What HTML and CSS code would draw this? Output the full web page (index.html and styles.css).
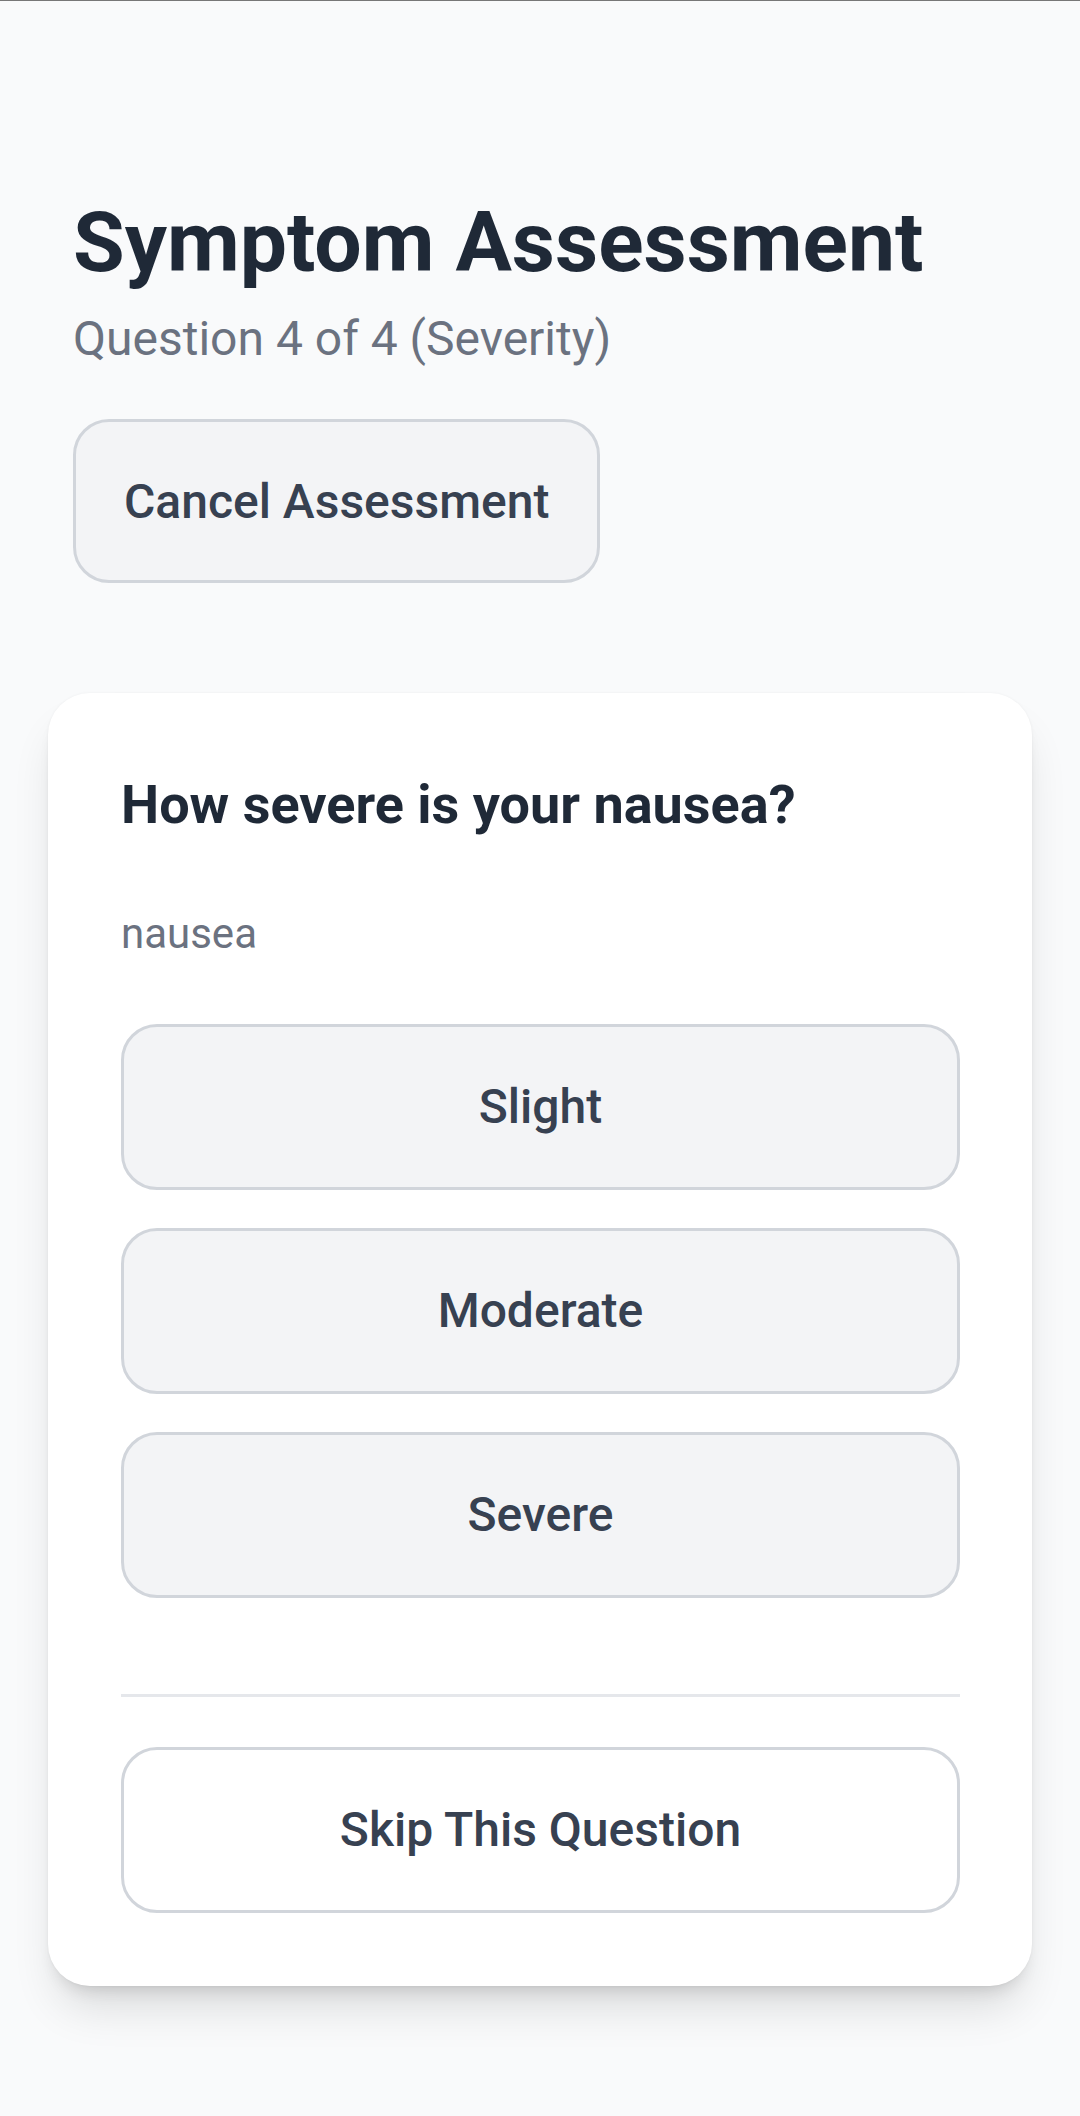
FILE: index.html
```html
<!DOCTYPE html>
<html lang="en">
<head>
<meta charset="utf-8">
<title>Symptom Assessment</title>
<link rel="stylesheet" href="styles.css">
</head>
<body>
<div class="page">
  <header class="header">
    <h1 class="title">Symptom Assessment</h1>
    <p class="subtitle">Question 4 of 4 (Severity)</p>
    <button class="btn btn-cancel">Cancel Assessment</button>
  </header>
  <section class="card">
    <h2 class="question">How severe is your nausea?</h2>
    <p class="symptom">nausea</p>
    <div class="options">
      <button class="btn btn-option">Slight</button>
      <button class="btn btn-option">Moderate</button>
      <button class="btn btn-option">Severe</button>
    </div>
    <hr class="divider">
    <button class="btn btn-skip">Skip This Question</button>
  </section>
</div>
</body>
</html>
```
FILE: styles.css
```css
* { box-sizing: border-box; }
html, body { margin: 0; padding: 0; }
body {
  background: #f9fafb;
  font-family: Roboto, "Liberation Sans", sans-serif;
  color: #1f2937;
}
.page {
  border-top: 1px solid #777;
  padding: 192px 48px 60px;
  min-height: 2116px;
}
.header {
  padding-left: 25px;
  display: flex;
  flex-direction: column;
  align-items: flex-start;
}
.title {
  margin: 0;
  font-size: 84px;
  line-height: 100px;
  font-weight: 700;
  color: #1f2937;
}
.subtitle {
  margin: 14px 0 0;
  font-size: 48px;
  line-height: 64px;
  color: #6b7280;
}
.btn {
  font-family: Roboto, "Liberation Sans", sans-serif;
  font-size: 48px;
  line-height: 72px;
  font-weight: 500;
  color: #374151;
  border: 3px solid #d1d5db;
  border-radius: 36px;
  background: #f3f4f6;
  text-align: center;
}
.btn-cancel {
  margin-top: 48px;
  padding: 44px 48px 42px;
}
.card {
  margin-top: 110px;
  background: #fff;
  border-radius: 42px;
  padding: 72px 72px 73px 73px;
  box-shadow: 0 30px 45px -9px rgba(0,0,0,0.12), 0 12px 18px -10px rgba(0,0,0,0.16), 0 0 3px rgba(0,0,0,0.05);
}
.question {
  margin: 0;
  font-size: 54px;
  line-height: 80px;
  font-weight: 700;
  color: #1f2937;
}
.symptom {
  margin: 57px 0 0;
  font-size: 42px;
  line-height: 63px;
  color: #6b7280;
}
.options {
  margin-top: 59px;
  display: flex;
  flex-direction: column;
  gap: 38px;
}
.btn-option {
  width: 100%;
  padding: 44px 24px;
}
.divider {
  margin: 96px 0 50px;
  border: 0;
  height: 3px;
  background: #e5e7eb;
}
.btn-skip {
  width: 100%;
  padding: 44px 24px;
  background: #fff;
}
```
